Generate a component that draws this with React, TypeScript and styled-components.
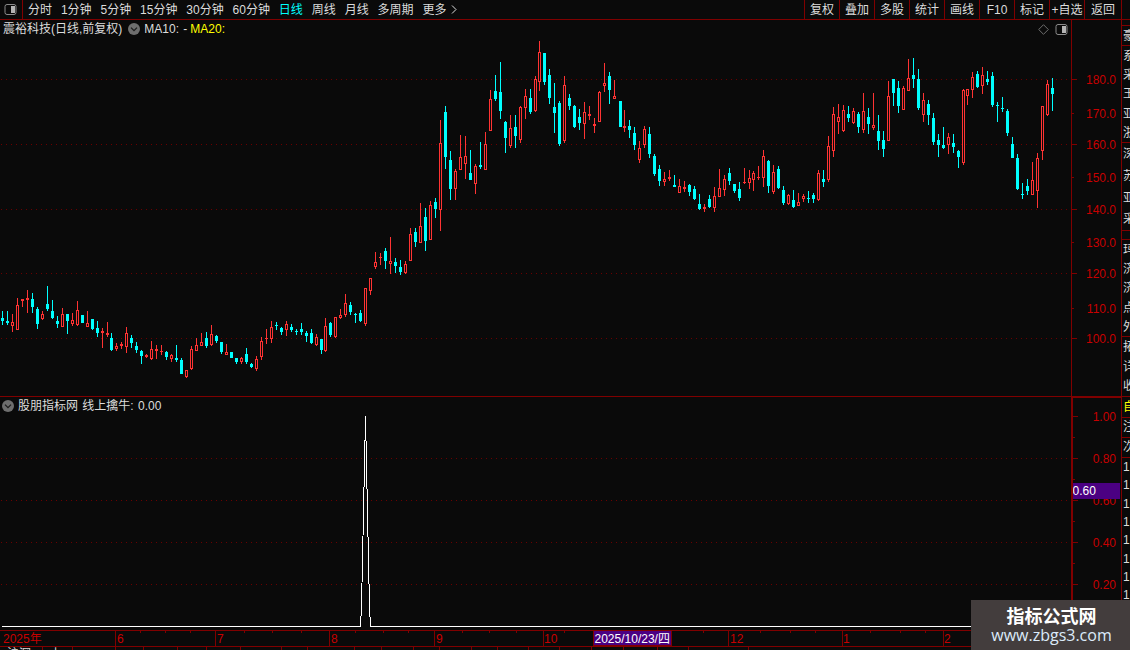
import React from 'react';
import styled, { createGlobalStyle } from 'styled-components';

const RED = '#800000';
const LABEL = '#c80000';
const BG = '#0a0a0a';
const FONT = '"Liberation Sans", "Noto Sans CJK SC", sans-serif';

const Global = createGlobalStyle`
  html, body { margin: 0; padding: 0; background: ${BG}; overflow: hidden; }
  #root { width: 1130px; height: 650px; }
`;

/* [zoomX, wickTop, bodyTop, bodyBottom, wickBottom, isRed] in each crop's 3x coordinates */
type C = [number, number, number, number, number, number];
const A: C[] = [
[7,93,113,124,135,0],[22,93,123,130,135,0],[37,102,126,137,155,1],[52,55,76,149,150,1],[67,58,58,63,80,1],[82,30,55,60,98,1],[97,40,57,81,98,0],[112,82,87,131,147,0],[127,93,102,117,120,1],[142,18,72,87,93,0],[157,60,93,114,118,0],[172,108,123,132,145,0],[187,85,102,140,142,1],[202,102,102,123,162,0],[217,100,121,132,138,1],[232,63,91,134,138,1],[247,105,105,129,130,0],[262,93,129,141,142,1],[277,118,118,147,150,0],[292,123,144,159,170,0],[307,145,153,160,204,1],[322,126,160,165,172,1],[335,160,174,209,212,0],[349,190,198,206,212,1],[364,186,192,197,207,1],[379,141,160,200,219,1],[394,166,175,189,205,0],[409,185,198,210,218,0],[424,210,213,228,252,0],[439,222,226,232,234,1],[454,183,208,237,240,1],[469,195,208,212,236,1],[484,195,213,214,225,1],[499,212,216,231,240,0],[514,222,226,236,246,1],[529,195,234,241,245,0],[544,235,240,282,282,0],[559,270,271,292,293,1],[574,198,207,268,270,1],[589,175,196,212,213,1],[604,159,187,197,198,1],[619,156,175,198,204,0],[634,135,163,195,198,1],[649,165,169,184,190,0],[664,186,186,216,222,0],[679,193,216,224,225,1],[694,215,216,233,234,0],[709,234,235,246,252,0],[724,231,233,245,251,1],[739,204,222,246,252,0],[754,249,252,261,264,0],[769,228,237,267,273,1],[784,171,183,231,240,1],[799,148,175,178,192,1],[814,123,141,177,189,1],[829,126,134,136,150,0],[844,141,144,156,165,0],[859,123,133,150,168,1],[874,132,141,150,156,0],[889,148,154,155,165,0],[904,129,148,156,165,0],[919,153,159,168,186,0],[934,147,159,190,191,0],[949,163,171,195,199,1],[964,177,177,210,222,0],[976,114,138,213,216,1],[991,126,129,165,171,0],[1006,111,111,171,174,1],[1021,87,106,114,117,1],[1036,42,70,104,111,1],[1051,66,75,96,105,0],[1066,99,102,104,129,0],[1081,90,99,123,126,0],[1096,24,25,132,138,1],[1111,-5,-6,33,45,1],
];
const B: C[] = [
[46,666,697,710,716,1],[61,670,682,683,705,1],[76,655,664,692,716,0],[91,622,694,701,732,1],[106,685,697,708,729,0],[121,690,712,725,735,0],[136,694,703,730,731,1],[151,595,613,692,692,1],[166,595,606,636,651,0],[181,519,589,638,638,1],[196,534,561,633,663,0],[211,514,526,629,629,1],[226,504,516,537,564,0],[241,270,340,539,603,1],[256,228,246,381,417,0],[271,363,390,477,510,0],[286,418,424,476,510,1],[301,316,382,419,419,1],[316,318,379,401,447,1],[331,360,429,450,450,0],[346,403,409,461,492,1],[361,336,405,411,417,0],[376,306,343,419,419,1],[391,180,208,302,303,1],[406,135,183,207,213,0],[421,96,186,243,267,0],[436,273,276,324,369,0],[451,255,295,347,354,1],[466,255,291,318,354,0],[481,229,232,329,339,1],[496,177,199,233,267,1],[511,177,204,246,252,0],[526,138,148,243,246,1],[538,33,67,155,183,1],[553,69,69,156,165,0],[568,117,135,204,222,0],[583,159,231,249,309,0],[598,213,219,342,348,0],[613,138,166,333,339,1],[628,192,204,228,240,0],[643,225,228,291,294,0],[658,237,261,279,300,0],[673,216,247,281,327,1],[688,228,252,258,270,1],[703,264,282,288,309,1],[718,183,186,275,276,1],[733,99,160,167,186,1],[748,126,138,180,222,0],[763,150,198,206,207,1],
];
const D: C[] = [
[0,153,153,231,231,0],[13,180,228,233,246,1],[28,210,228,240,264,0],[43,231,249,285,300,0],[58,273,295,329,339,1],[73,228,238,284,294,1],[88,231,252,312,324,0],[103,312,318,372,378,0],[118,346,357,393,408,0],[133,366,388,395,408,1],[148,360,381,387,393,1],[163,375,405,411,411,0],[178,387,408,428,429,1],[193,393,411,416,426,1],[208,403,405,426,438,0],[223,408,417,447,450,0],[238,432,462,477,480,0],[253,462,471,476,486,1],[268,435,447,471,474,0],[283,411,438,473,486,1],[298,357,414,440,441,1],[313,375,387,419,438,1],[328,354,369,393,405,0],[343,402,402,423,429,0],[358,396,417,444,453,0],[373,354,396,399,402,1],[388,360,385,399,417,1],[400,363,369,389,423,1],[415,348,381,384,390,1],[430,300,318,383,411,1],[445,330,333,408,429,0],[460,345,366,426,432,1],[475,348,357,414,417,0],[490,408,420,459,465,0],[505,432,435,462,465,1],[520,420,450,471,474,0],[535,429,457,468,468,1],[550,432,438,446,456,1],[565,423,444,447,459,0],[580,429,435,447,459,0],[595,360,369,450,453,1],[610,360,387,396,411,0],[625,258,288,390,396,1],[640,171,192,303,321,1],[655,162,201,216,252,1],
];
const E: C[] = [
[40,165,180,243,246,1],[55,168,192,204,216,0],[70,174,183,219,222,1],[85,186,192,231,249,0],[100,129,183,240,249,1],[115,174,201,222,252,0],[130,129,225,234,240,1],[145,195,243,273,300,0],[160,243,270,297,321,0],[175,93,138,272,273,1],[190,87,87,129,168,0],[205,93,114,168,189,0],[220,108,114,179,180,1],[235,27,84,122,123,1],[250,24,75,87,114,0],[265,57,87,174,180,0],[280,129,150,194,216,1],[295,150,162,195,225,0],[310,189,204,276,285,0],[325,252,270,285,321,0],[340,231,285,294,297,0],[355,249,261,285,312,1],[370,252,279,291,309,0],[385,300,303,321,354,0],[400,117,120,339,345,1],[412,117,117,138,165,1],[427,66,81,120,144,1],[442,63,72,111,114,0],[457,51,75,108,132,1],[472,63,87,96,105,0],[487,66,78,165,171,0],[502,156,165,167,216,0],[517,141,174,177,186,0],[532,177,183,249,258,0],[547,261,282,324,324,0],[562,312,324,417,420,0],[577,399,432,435,447,0],[592,387,408,423,435,0],[607,336,390,434,435,1],[622,309,324,422,474,1],[637,168,168,303,330,1],[652,90,102,195,198,1],[667,84,114,132,183,0],
];

const toPx = (list: C[], ox: number, oy: number) =>
  list.map(([x, wt, bt, bb, wb, red]) => ({
    x: Math.floor(ox + x / 3),
    wt: Math.round(oy + wt / 3),
    bt: Math.round(oy + bt / 3),
    bb: Math.round(oy + bb / 3),
    wb: Math.round(oy + wb / 3),
    red: !!red,
  }));
const candles = [...toPx(A, 0, 280), ...toPx(B, 360, 30), ...toPx(D, 620, 50), ...toPx(E, 830, 50)];

const priceTicks: [number, string][] = [[79, '180.0'], [113, '170.0'], [144, '160.0'], [177, '150.0'], [209, '140.0'], [242, '130.0'], [273, '120.0'], [308, '110.0'], [338, '100.0']];
const indTicks: [number, string][] = [[416, '1.00'], [458, '0.80'], [500, '0.60'], [542, '0.40'], [584, '0.20']];

const Page = styled.div`
  position: relative; width: 1130px; height: 650px; overflow: hidden;
  background: ${BG}; color: #dcdcdc; font: 12px/1 ${FONT};
  display: flex; flex-direction: column;
`;
const Toolbar = styled.div`
  height: 19px; flex: none; display: flex; align-items: center;
  border-bottom: 1px solid ${RED};
`;
const ToggleBox = styled.div`
  width: 23px; height: 19px; box-sizing: border-box; flex: none; border-right: 1px solid ${RED};
  display: flex; align-items: center; justify-content: center; padding-right: 1px;
`;
const Periods = styled.div`display: flex; gap: 8.9px; margin-left: 5px; flex: 1;`;
const Period = styled.span<{ $on?: boolean }>`
  display: inline-flex; align-items: center; gap: 5px;
  color: ${p => (p.$on ? '#00ffff' : '#dcdcdc')};
`;
const Actions = styled.div`display: flex; height: 19px; border-left: 1px solid ${RED}; margin-right: 8px;`;
const Action = styled.div<{ $w?: number }>`
  width: ${p => p.$w ?? 35}px; box-sizing: border-box; border-right: 1px solid ${RED};
  display: flex; align-items: center; justify-content: center;
`;
const Body = styled.div`flex: 1; display: flex; min-height: 0;`;
const Charts = styled.div`width: 1121px; flex: none; border-right: 1px solid ${RED}; display: flex; flex-direction: column;`;
const Pane = styled.div<{ $h: number; $line?: boolean }>`
  height: ${p => p.$h}px; flex: none; display: flex;
  ${p => (p.$line ? `border-bottom: 1px solid ${RED};` : '')}
`;
const Plot = styled.div`width: 1071px; flex: none; display: flex; flex-direction: column;`;
const Legend = styled.div<{ $h: number; $indent?: number }>`
  height: ${p => p.$h}px; flex: none; display: flex; align-items: center; white-space: pre;
  padding-left: ${p => p.$indent ?? 3}px; word-spacing: 1px;
`;
const LegendIcon = styled.span`display: inline-flex; margin: 0 4px 0 6px;`;
const PaneIcon = styled.span`display: inline-flex; margin-right: 4px;`;
const Yellow = styled.span`color: #ffff00; margin-left: 3px;`;
const Corner = styled.div`margin-left: auto; display: flex; gap: 6px; align-items: center; padding-right: 3px;`;
const Chart = styled.svg`display: block; flex: none; shape-rendering: crispEdges;`;
const Axis = styled.svg<{ $thick?: boolean }>`
  display: block; flex: none; width: 50px; box-sizing: border-box; height: 100%;
  border-left: ${p => (p.$thick ? 2 : 1)}px solid ${RED};
  ${p => (p.$thick ? `border-top: 1px solid ${RED};` : '')}
  shape-rendering: crispEdges;
`;
const AxisText = styled.text`font: 12px ${FONT}; fill: ${LABEL};`;
const BoxText = styled.text`font: 12px ${FONT}; fill: #ffffff;`;
const TimeRow = styled.div`
  height: 15px; flex: none; border-top: 1px solid ${RED}; border-bottom: 1px solid ${RED};
`;
const StatusRow = styled.div`flex: 1; display: flex; overflow: hidden;`;
const StatusCell = styled.div<{ $w: number }>`
  width: ${p => p.$w}px; flex: none; box-sizing: border-box; height: 4px; border-right: 1px solid ${RED};
  overflow: hidden; padding: 1px 0 0 7px; white-space: nowrap; line-height: 12px;
`;
const ListCol = styled.div`flex: 1; display: flex; flex-direction: column; overflow: hidden;`;
const ListCell = styled.div<{ $h: number; $line?: boolean; $yellow?: boolean }>`
  height: ${p => p.$h}px; flex: none; box-sizing: border-box; overflow: hidden; white-space: nowrap;
  padding-left: 1px; display: flex; align-items: center; line-height: 12px;
  color: ${p => (p.$yellow ? '#ffff00' : '#dcdcdc')};
  ${p => (p.$line ? `border-bottom: 1px solid ${RED};` : '')}
`;
const Watermark = styled.div`
  position: absolute; left: 971px; top: 600px; width: 159px; height: 50px; background: #433d3d;
  display: flex; flex-direction: column; align-items: center; padding-top: 5px; box-sizing: border-box; padding-left: 2px;
`;
const MarkTitle = styled.div`font: bold 18px/20px "Noto Sans CJK SC", sans-serif; color: #ffffff;`;
const MarkUrl = styled.div`font: 16px/20px "Open Sans", sans-serif; color: #dcebfa;`;

const Toggle = () => (
  <svg width="13" height="11" viewBox="0 0 13 11">
    <rect x="1" y="0.5" width="11" height="10" rx="2" fill="none" stroke="#8a8a8a" />
    <rect x="7" y="2" width="4" height="7" fill="#b4b4b4" />
  </svg>
);
const Chevron = () => (
  <svg width="12" height="12" viewBox="0 0 12 12">
    <circle cx="6" cy="6" r="6" fill="#6e6e6e" />
    <path d="M3 4.6 L6 7.6 L9 4.6" fill="none" stroke="#1c1c1c" strokeWidth="1.3" />
  </svg>
);
const More = () => (
  <svg width="6" height="9" viewBox="0 0 6 9">
    <path d="M1 .5 L5 4.5 L1 8.5" fill="none" stroke="#dcdcdc" />
  </svg>
);

const Dotted = ({ y, to }: { y: number; to: number }) => (
  <line x1="1" x2={to} y1={y + 0.5} y2={y + 0.5} stroke="#6a0000" strokeDasharray="1 4" />
);

const Candle = ({ c }: { c: (typeof candles)[number] }) => {
  const color = c.red ? '#ff3333' : '#00ffff';
  const h = Math.max(1, c.bb - c.bt);
  return (
    <g>
      <rect x={c.x} y={c.wt} width={1} height={Math.max(1, c.wb - c.wt)} fill={color} />
      {c.red && h > 2 ? (
        <rect x={c.x - 0.5} y={c.bt + 0.5} width={2} height={h - 1} fill={BG} stroke={color} />
      ) : (
        <rect x={c.x - 1} y={c.bt} width={3} height={h} fill={color} />
      )}
    </g>
  );
};

const periods = ['分时', '1分钟', '5分钟', '15分钟', '30分钟', '60分钟', '日线', '周线', '月线', '多周期'];
const actions = ['复权', '叠加', '多股', '统计', '画线', 'F10', '标记', '+自选'];

const timeLabels: [number, string][] = [[3, '2025年'], [117, '6'], [217, '7'], [331, '8'], [436, '9'], [544, '10'], [730, '12'], [843, '1'], [944, '2']];
const timeDividers = [115, 215, 329, 434, 543, 728, 842, 943];
const timeTicks = [140, 165, 190, 244, 272, 301, 355, 383, 408, 462, 489, 516, 564, 622, 703, 760, 790, 815, 870, 900, 925];
const statusWidths = [43, 30, 43, 28, 34, 29, 34, 41, 26, 47, 27, 32, 26, 32, 26, 31, 31, 32, 32, 34, 31, 60];
const listA = ['系', '采', '玉', '亚', '浙'];
const listA2 = ['深', '苏', '亚', '采'];
const listB = ['玛', '济', '济', '点', '外'];
const listC = ['拓', '详', '收'];
const listD = ['1', '1', '1', '1', '1', '1', '1', '1'];

export default function App() {
  return (
    <Page>
      <Global />
      <Toolbar>
        <ToggleBox><Toggle /></ToggleBox>
        <Periods>
          {periods.map(t => <Period key={t} $on={t === '日线'}>{t}</Period>)}
          <Period>更多<More /></Period>
        </Periods>
        <Actions>
          {actions.map(t => <Action key={t}>{t}</Action>)}
          <Action $w={37}>返回</Action>
        </Actions>
      </Toolbar>
      <Body>
        <Charts>
          <Pane $h={376} $line>
            <Plot>
              <Legend $h={18}>
                震裕科技(日线,前复权)
                <LegendIcon><Chevron /></LegendIcon>
                MA10: -
                <Yellow>MA20:</Yellow>
                <Corner>
                  <svg width="11" height="11" viewBox="0 0 11 11">
                    <path d="M5.5 .7 L10.3 5.5 L5.5 10.3 L.7 5.5 Z" fill="none" stroke="#6e6e6e" />
                  </svg>
                  <Toggle />
                </Corner>
              </Legend>
              <Chart width={1071} height={358} viewBox="0 38 1071 358">
                {[79, 144, 209, 273, 338].map(y => <Dotted key={y} y={y} to={1071} />)}
                {candles.map((c, i) => <Candle key={i} c={c} />)}
              </Chart>
            </Plot>
            <Axis viewBox="1072 20 49 376">
              {priceTicks.map(([y, t], i) => (
                <g key={t}>
                  <rect x={1072} y={y} width={i % 2 === 0 ? 5 : 2} height={1} fill={RED} />
                  <AxisText x={1116} y={y + 4.5} textAnchor="end">{t}</AxisText>
                </g>
              ))}
            </Axis>
          </Pane>
          <Pane $h={233}>
            <Plot>
              <Legend $h={17} $indent={2}>
                <PaneIcon><Chevron /></PaneIcon>
                股朋指标网 线上擒牛: 0.00
              </Legend>
              <Chart width={1071} height={216} viewBox="0 414 1071 216">
                {[458, 500, 542, 584].map(y => <Dotted key={y} y={y} to={1071} />)}
                <polyline
                  points="2,626.5 360.5,626.5 361.5,606 362.5,560 365.5,416 368.5,560 369.5,606 370.5,626.5 1071,626.5"
                  fill="none" stroke="#ffffff" strokeWidth="1"
                />
              </Chart>
            </Plot>
            <Axis $thick viewBox="1073 398 48 232">
              {[437, 479, 521, 563, 605].map(y => <rect key={y} x={1073} y={y} width={2} height={1} fill={RED} />)}
              {indTicks.map(([y, t]) => (
                <g key={t}>
                  <rect x={1073} y={y} width={5} height={1} fill={RED} />
                  <AxisText x={1116} y={y + 4.5} textAnchor="end">{t}</AxisText>
                </g>
              ))}
              <rect x={1073} y={483} width={47} height={16} fill="#4b0082" />
              <BoxText x={1072.5} y={495}>0.60</BoxText>
            </Axis>
          </Pane>
          <TimeRow>
            <Chart width={1121} height={15} viewBox="0 631 1121 15">
              {timeTicks.map(x => <rect key={x} x={x} y={631} width={1} height={2} fill={RED} />)}
              {timeDividers.map(x => <rect key={x} x={x} y={631} width={1} height={15} fill={RED} />)}
              {timeLabels.map(([x, t]) => <AxisText key={t} x={x} y={643}>{t}</AxisText>)}
              <rect x={593.5} y={630.5} width={78} height={15} fill="#4b0082" stroke={RED} />
              <BoxText x={594.5} y={643}>2025/10/23/四</BoxText>
            </Chart>
          </TimeRow>
          <StatusRow>
            {statusWidths.map((w, i) => (
              <StatusCell key={i} $w={w}>{i === 0 ? '沪深' : i === 1 ? '上' : ''}</StatusCell>
            ))}
          </StatusRow>
        </Charts>
        <ListCol>
          <ListCell $h={6} $line />
          <ListCell $h={20} $line>豪</ListCell>
          {listA.map((t, i) => <ListCell key={i} $h={19.4} $line={i === 4}>{t}</ListCell>)}
          {listA2.map((t, i) => <ListCell key={i} $h={22} $line={i === 3}>{t}</ListCell>)}
          <ListCell $h={9} $line />
          {listB.map((t, i) => <ListCell key={i} $h={19.4} $line={i === 4}>{t}</ListCell>)}
          {listC.map((t, i) => <ListCell key={i} $h={20} $line={i === 2}>{t}</ListCell>)}
          <ListCell $h={21} $line $yellow>自</ListCell>
          <ListCell $h={20} $line>注</ListCell>
          <ListCell $h={20} $line>次</ListCell>
          {listD.map((t, i) => <ListCell key={i} $h={18.3}>{t}</ListCell>)}
        </ListCol>
      </Body>
      <Watermark>
        <MarkTitle>指标公式网</MarkTitle>
        <MarkUrl>www.zbgs3.com</MarkUrl>
      </Watermark>
    </Page>
  );
}
